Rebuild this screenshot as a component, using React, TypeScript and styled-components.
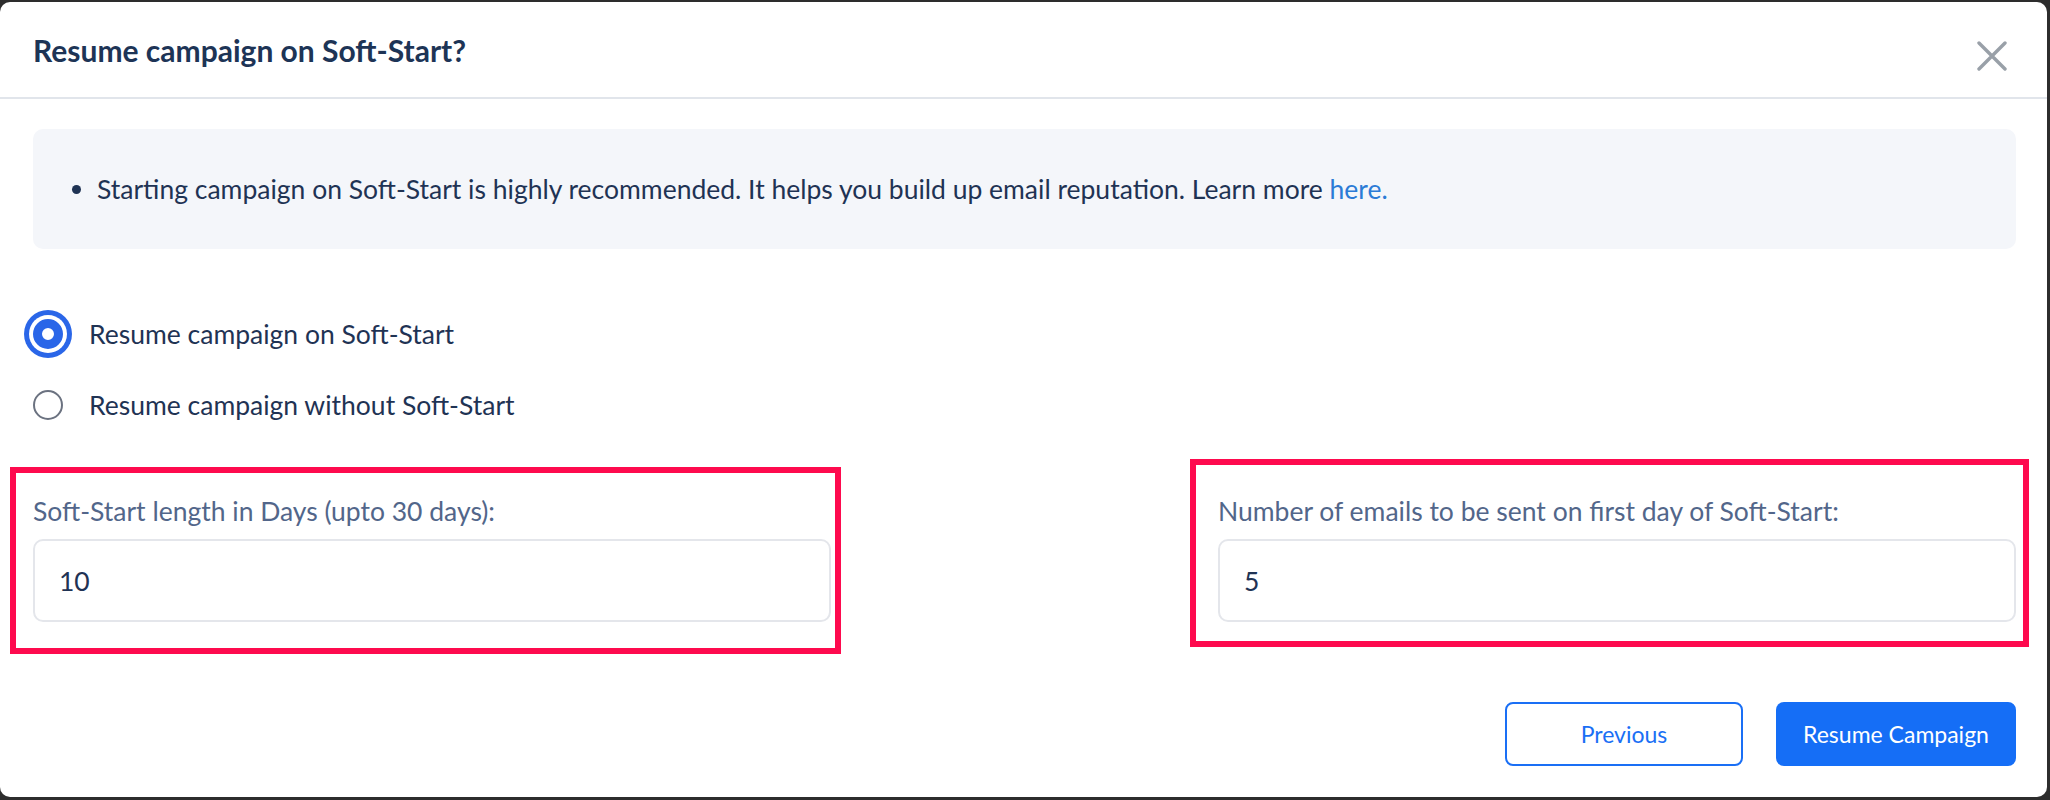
import styled, { createGlobalStyle } from "styled-components";

const GlobalStyle = createGlobalStyle`
    html, body {
        margin: 0;
        padding: 0;
        background-color: #2d2d2d;
        font-family: Lato, "Open Sans", sans-serif;
    }
    * {
        box-sizing: border-box;
    }
`;

type RadioOption = {
    id: string;
    label: string;
    checked: boolean;
};

const options: RadioOption[] = [
    { id: "soft", label: "Resume campaign on Soft-Start", checked: true },
    { id: "plain", label: "Resume campaign without Soft-Start", checked: false },
];

const App = () => {
    return (
        <>
            <GlobalStyle />
            <Backdrop>
                <Modal>
                    <Header>
                        <Title>Resume campaign on Soft-Start?</Title>
                        <Close aria-label="Close">
                            <svg width="30" height="30" viewBox="0 0 30 30">
                                <path
                                    d="M2 2 L28 28 M28 2 L2 28"
                                    stroke="#99a0a8"
                                    strokeWidth="3.4"
                                    strokeLinecap="round"
                                    fill="none"
                                />
                            </svg>
                        </Close>
                    </Header>

                    <Body>
                        <InfoBox>
                            <InfoList>
                                <li>
                                    <span>
                                        Starting campaign on Soft-Start is highly recommended. It helps you
                                        build up email reputation. Learn more <Link href="#">here.</Link>
                                    </span>
                                </li>
                            </InfoList>
                        </InfoBox>

                        <RadioGroup>
                            {options.map((option) => (
                                <RadioRow key={option.id}>
                                    <RadioDot $checked={option.checked} />
                                    <RadioLabel>{option.label}</RadioLabel>
                                </RadioRow>
                            ))}
                        </RadioGroup>

                        <Fields>
                            <Field>
                                <Highlight $top={-27} $right={-10} $bottom={-32} $left={-23} />
                                <FieldLabel>Soft-Start length in Days (upto 30 days):</FieldLabel>
                                <Input type="text" defaultValue="10" />
                            </Field>
                            <Field>
                                <Highlight $top={-35} $right={-13} $bottom={-25} $left={-28} />
                                <FieldLabel>Number of emails to be sent on first day of Soft-Start:</FieldLabel>
                                <Input type="text" defaultValue="5" />
                            </Field>
                        </Fields>

                        <Footer>
                            <OutlineButton>Previous</OutlineButton>
                            <PrimaryButton>Resume Campaign</PrimaryButton>
                        </Footer>
                    </Body>
                </Modal>
            </Backdrop>
        </>
    );
};

export default App;

const Backdrop = styled.div`
    width: 100%;
    height: 800px;
    padding: 2px 3px 3px 0;
`;

const Modal = styled.div`
    height: 100%;
    background-color: #ffffff;
    border-radius: 10px;
    overflow: hidden;
`;

const Header = styled.header`
    height: 97px;
    padding: 0 40px 0 33px;

    display: flex;
    justify-content: space-between;
    align-items: center;

    border-bottom: 2px solid #e1e5eb;
`;

const Title = styled.h2`
    margin: 0;
    font-size: 30px;
    font-weight: 700;
    color: #1d3456;
`;

const Close = styled.button`
    width: 30px;
    height: 30px;
    margin-top: 12px;
    padding: 0;

    display: flex;
    align-items: center;
    justify-content: center;

    border: none;
    background: none;
`;

const Body = styled.div`
    padding: 30px 31px 31px 33px;
`;

const InfoBox = styled.div`
    height: 120px;
    padding-left: 39px;

    display: flex;
    align-items: center;

    border-radius: 10px;
    background-color: #f4f6fa;
`;

const InfoList = styled.ul`
    margin: 0;
    padding: 0;
    list-style: none;

    & > li {
        display: flex;
        align-items: center;
        gap: 16px;
        font-size: 26.5px;
        line-height: 34px;
        color: #1f3354;
    }

    & > li::before {
        content: "";
        flex: none;
        width: 9px;
        height: 9px;
        border-radius: 50%;
        background-color: #1f3354;
    }
`;

const Link = styled.a`
    color: #2b7bd6;
    text-decoration: none;
`;

const RadioGroup = styled.div`
    margin-top: 65px;

    display: flex;
    flex-direction: column;
    gap: 31px;
`;

const RadioRow = styled.label`
    height: 40px;

    display: flex;
    align-items: center;
    gap: 26px;
`;

const RadioDot = styled.span<{ $checked: boolean }>`
    flex: none;
    width: 30px;
    height: 30px;
    border-radius: 50%;
    background-color: #ffffff;
    border: ${({ $checked }) => ($checked ? "9px solid #2a66e8" : "2px solid #6b7280")};
    box-shadow: ${({ $checked }) =>
        $checked ? "0 0 0 4px #ffffff, 0 0 0 9px #2a66e8" : "none"};
`;

const RadioLabel = styled.span`
    font-size: 26.5px;
    color: #1f3354;
`;

const Fields = styled.div`
    margin-top: 69px;

    display: grid;
    grid-template-columns: 798px 798px;
    justify-content: space-between;
`;

const Field = styled.div`
    position: relative;

    display: flex;
    flex-direction: column;
    gap: 11px;
`;

const Highlight = styled.div<{ $top: number; $right: number; $bottom: number; $left: number }>`
    position: absolute;
    top: ${({ $top }) => $top}px;
    right: ${({ $right }) => $right}px;
    bottom: ${({ $bottom }) => $bottom}px;
    left: ${({ $left }) => $left}px;

    border: 6px solid #fe0a4e;
    pointer-events: none;
`;

const FieldLabel = styled.label`
    font-size: 26.5px;
    line-height: 34px;
    color: #52668a;
`;

const Input = styled.input`
    width: 100%;
    height: 83px;
    padding: 0 24px;

    font-family: inherit;
    font-size: 26.5px;
    color: #1f3354;

    border: 2px solid #e4e6eb;
    border-radius: 10px;
    background-color: #ffffff;
    outline: none;
`;

const Footer = styled.div`
    margin-top: 80px;

    display: flex;
    justify-content: flex-end;
    gap: 33px;
`;

const BaseButton = styled.button`
    height: 64px;

    font-family: inherit;
    font-size: 23px;

    border-radius: 8px;
    cursor: pointer;
`;

const OutlineButton = styled(BaseButton)`
    width: 238px;
    color: #1a6ff5;
    border: 2px solid #1a6ff5;
    background-color: #ffffff;
`;

const PrimaryButton = styled(BaseButton)`
    width: 240px;
    color: #ffffff;
    border: none;
    background-color: #156ef6;
`;
